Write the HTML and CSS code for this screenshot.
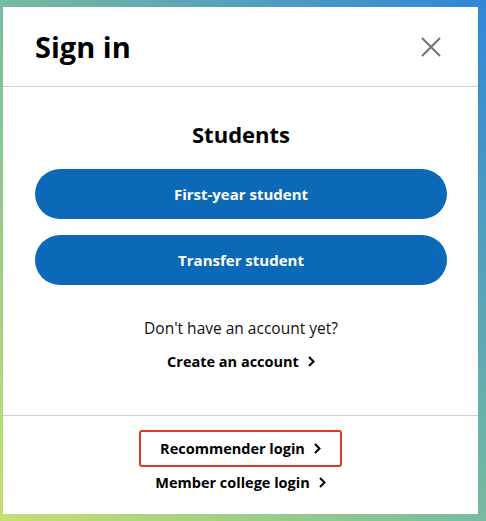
FILE: index.html
```html
<!DOCTYPE html>
<html lang="en">
<head>
    <meta charset="UTF-8">
    <meta name="viewport" content="width=device-width, initial-scale=1.0">
    <title>Sign in</title>
    <link rel="stylesheet" href="styles.css">
</head>
<body>
    <div id="modal">
        <div class="cabecalho">
            <h1>Sign in</h1>
            <button class="fechar" aria-label="Close">
                <svg width="20" height="20" viewBox="0 0 20 20">
                    <path d="M1 1 L19 19 M19 1 L1 19" stroke="#757575" stroke-width="2" fill="none"/>
                </svg>
            </button>
        </div>
        <div class="conteudo">
            <h2>Students</h2>
            <a class="botao" href="#">First-year student</a>
            <a class="botao" href="#">Transfer student</a>
            <p class="pergunta">Don't have an account yet?</p>
            <a class="link" href="#">Create an account
                <svg class="seta" width="7" height="11" viewBox="0 0 7 11"><path d="M1 1 L5.5 5.5 L1 10" stroke="#000" stroke-width="2" fill="none"/></svg>
            </a>
        </div>
        <div class="rodape">
            <a class="link destaque" href="#">Recommender login
                <svg class="seta" width="7" height="11" viewBox="0 0 7 11"><path d="M1 1 L5.5 5.5 L1 10" stroke="#000" stroke-width="2" fill="none"/></svg>
            </a>
            <a class="link" href="#">Member college login
                <svg class="seta" width="7" height="11" viewBox="0 0 7 11"><path d="M1 1 L5.5 5.5 L1 10" stroke="#000" stroke-width="2" fill="none"/></svg>
            </a>
        </div>
    </div>
</body>
</html>
```

FILE: styles.css
```css
body {
    margin: 0;
    padding: 7px 8px 7px 3px;
    font-family: 'Open Sans', 'Noto Sans', sans-serif;
    color: #111;
    background: linear-gradient(to top right, #c6e070 0%, #7fc09a 45%, #2f86d8 100%);
    min-height: 521px;
    box-sizing: border-box;
}

#modal {
    width: 475px;
    height: 507px;
    background: #fff;
    display: flex;
    flex-direction: column;
}

.cabecalho {
    height: 80px;
    border-bottom: 1px solid #d0d0d0;
    display: flex;
    align-items: center;
    justify-content: space-between;
    padding: 0 37px 0 32px;
    box-sizing: border-box;
}

h1 {
    margin: 0;
    font-size: 29px;
    font-weight: 700;
    color: #000;
}

.fechar {
    background: none;
    border: none;
    padding: 0;
    cursor: pointer;
    display: flex;
}

.conteudo {
    flex: 1;
    display: flex;
    flex-direction: column;
    align-items: center;
    padding: 0 31px 0 32px;
    border-bottom: 1px solid #d0d0d0;
}

h2 {
    margin: 32px 0 20px;
    font-size: 22px;
    font-weight: 700;
    color: #000;
}

.botao {
    display: flex;
    align-items: center;
    justify-content: center;
    width: 100%;
    height: 50px;
    border-radius: 25px;
    background: #0b69b7;
    color: #fff;
    font-size: 15px;
    font-weight: 700;
    text-decoration: none;
    margin-bottom: 16px;
}

.pergunta {
    margin: 16px 0 13px;
    font-size: 15.5px;
}

.link {
    color: #000;
    font-size: 14.5px;
    font-weight: 700;
    text-decoration: none;
    display: inline-flex;
    align-items: center;
    gap: 9px;
}

.rodape {
    height: 98px;
    display: flex;
    flex-direction: column;
    align-items: center;
    padding-top: 14px;
    box-sizing: border-box;
    gap: 6px;
}

.destaque {
    border: 2px solid #e8352b;
    border-radius: 3px;
    padding: 7px 19px;
}
```
